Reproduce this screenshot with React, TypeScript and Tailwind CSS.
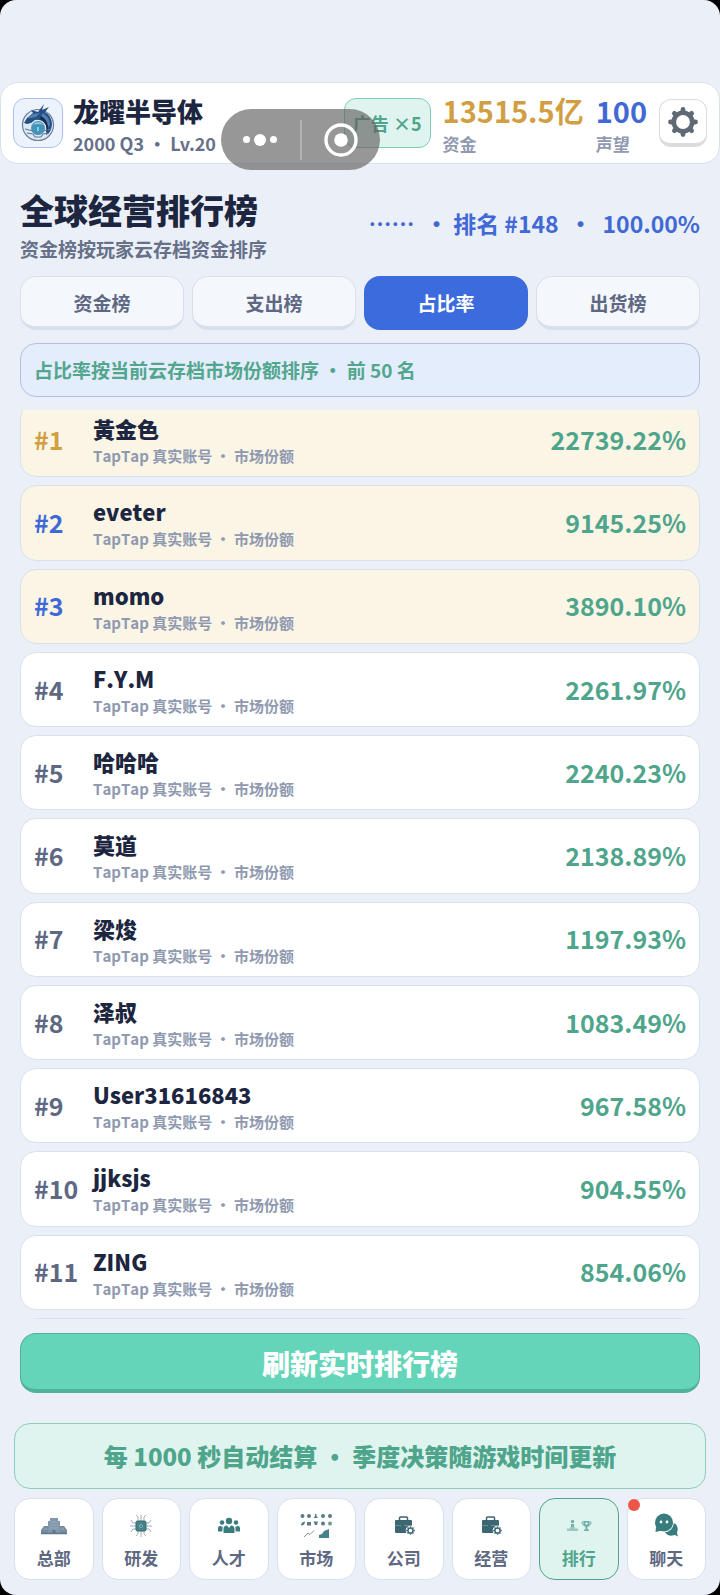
import { useLayoutEffect, useRef, useState } from "react"

const entries = [
  { name: "黃金色", share: "22739.22%" },
  { name: "eveter", share: "9145.25%" },
  { name: "momo", share: "3890.10%" },
  { name: "F.Y.M", share: "2261.97%" },
  { name: "哈哈哈", share: "2240.23%" },
  { name: "莫道", share: "2138.89%" },
  { name: "梁焌", share: "1197.93%" },
  { name: "泽叔", share: "1083.49%" },
  { name: "User31616843", share: "967.58%" },
  { name: "jjksjs", share: "904.55%" },
  { name: "ZING", share: "854.06%" },
]

const tabs = ["资金榜", "支出榜", "占比率", "出货榜"]

const navItems = [
  { label: "总部", icon: BuildingIcon },
  { label: "研发", icon: ChipIcon },
  { label: "人才", icon: PeopleIcon },
  { label: "市场", icon: MarketIcon },
  { label: "公司", icon: BriefcaseIcon },
  { label: "经营", icon: BriefcaseIcon },
  { label: "排行", icon: RankIcon },
  { label: "聊天", icon: ChatIcon, unread: true },
]

export default function App() {
  const [tab, setTab] = useState("占比率")
  const [page, setPage] = useState("排行")
  const listRef = useRef<HTMLDivElement>(null)

  useLayoutEffect(() => {
    if (listRef.current) listRef.current.scrollTop = 8
  }, [])

  return (
    <div className="bg-black">
      <div className="flex h-screen flex-col rounded-2xl bg-[#ebeff7] pt-[82px] font-['Noto_Sans_CJK_SC',sans-serif] font-black text-[#1c2640]">
        <Header />

        <main className="flex min-h-0 flex-1 flex-col px-5 pt-[25px]">
          {/* Title */}
          <div className="flex items-start justify-between">
            <div>
              <h1 className="text-[34px] leading-[42px]">全球经营排行榜</h1>
              <p className="mt-1 text-[19px] leading-7 font-bold text-[#667089]">资金榜按玩家云存档资金排序</p>
            </div>
            <p className="mt-5 text-[23px] leading-7 font-bold whitespace-pre text-[#4169d6]">……  • 排名 #148  •  100.00%</p>
          </div>

          {/* Tabs */}
          <div className="mt-[13px] grid grid-cols-4 gap-2">
            {tabs.map(t => (
              <button key={t} onClick={() => setTab(t)}
                className={`h-[54px] rounded-2xl text-[19px] font-bold ${
                  tab === t ? "bg-[#3b6bdd] text-white" : "border border-b-4 border-[#d9e0eb] bg-[#f4f7fc] pt-[3px] text-[#5e6882]"
                }`}>
                {t}
              </button>
            ))}
          </div>

          <p className="mt-[13px] rounded-2xl border border-[#b3c0e8] bg-[#e3edfc] px-[13px] py-[13px] text-[19px] leading-[26px] font-bold text-[#52a68e]">
            占比率按当前云存档市场份额排序 • 前 50 名
          </p>

          {/* Ranking list */}
          <div ref={listRef} className="mt-[13px] min-h-0 flex-1 overflow-y-auto [scrollbar-width:none]">
            <ol className="grid min-h-[991px] auto-rows-fr gap-2 [font-kerning:none]">
              {entries.map((entry, i) => (
                <li key={entry.name}
                  className={`flex items-center rounded-2xl border border-[#d8e1ee] px-[13px] font-bold ${i < 3 ? "bg-[#fbf5e6]" : "bg-white"}`}>
                  <span className={`w-[59px] text-[25px] ${i === 0 ? "text-[#d29e42]" : i < 3 ? "text-[#4169d6]" : "text-[#5e6882]"}`}>
                    #{i + 1}
                  </span>
                  <div className="flex-1 pt-px">
                    <p className="text-[22px] leading-7 font-black">{entry.name}</p>
                    <p className="mt-1 text-[15px] leading-5 text-[#8f99b0]">TapTap 真实账号 • 市场份额</p>
                  </div>
                  <span className="text-[25px] text-[#4fa58b]">{entry.share}</span>
                </li>
              ))}
              <li className="rounded-2xl border border-[#d8e1ee] bg-white" />
            </ol>
          </div>

          <button className="mt-3.5 h-[60px] rounded-2xl border border-b-4 border-[#52b199] bg-[#65d5b9] pt-0.5 text-[28px] text-white">
            刷新实时排行榜
          </button>
        </main>

        {/* Footer */}
        <footer className="mt-[30px] px-3.5 pb-[15px]">
          <p className="rounded-2xl border border-[#8bcfbb] bg-[#dff4ee] py-[15px] text-center text-2xl leading-[34px] text-[#4fa58b]">
            每 1000 秒自动结算 • 季度决策随游戏时间更新
          </p>
          <nav className="mt-[9px] grid grid-cols-8 gap-2">
            {navItems.map(({ label, icon: Icon, unread }) => (
              <button key={label} onClick={() => setPage(label)}
                className={`relative flex h-[82px] flex-col items-center rounded-2xl border pt-[9px] text-[17px] leading-7 font-bold ${
                  page === label ? "border-[#4fa58b] bg-[#dff4ee] text-[#4fa58b]" : "border-[#d8e1ee] bg-white text-[#5e6882]"
                }`}>
                <Icon />
                {label}
                {unread && <span className="absolute top-0 left-0 size-3 rounded-full bg-[#ec5648]" />}
              </button>
            ))}
          </nav>
        </footer>
      </div>
    </div>
  )
}

function Header() {
  return (
    <header className="relative flex h-[82px] items-center rounded-[18px] border border-[#d8e1ee] bg-white px-3 font-bold">
      <div className="flex size-[50px] items-center justify-center rounded-xl border border-[#a8c2ec] bg-[#edf3fd]">
        <DragonLogo />
      </div>
      <div className="ml-2.5 pt-2">
        <p className="text-[26px] leading-7 font-black">龙曜半导体</p>
        <p className="mt-1 text-lg leading-7 text-[#667089]">2000 Q3 • Lv.20</p>
      </div>
      <div className="ml-auto flex items-center">
        <button className="h-[50px] rounded-xl border border-[#7fcdb5] bg-[#dff4ee] px-2 text-lg text-[#4fa58b]">
          广告 ×5
        </button>
        <Stat label="资金" value="13515.5亿" color="text-[#d29e42]" />
        <Stat label="声望" value="100" color="text-[#4169d6]" />
        <button aria-label="设置" className="ml-3 flex h-12 w-12 items-center justify-center rounded-xl border border-b-4 border-[#dcdcdc] bg-white">
          <GearIcon />
        </button>
      </div>

      {/* Mini program capsule */}
      <div className="absolute top-[26px] left-[220px] flex h-[61px] w-[159px] items-center rounded-full bg-[#5f5f5f]/65">
        <button aria-label="更多" className="flex flex-1 items-center justify-center gap-1 text-white">
          <i className="size-[7px] rounded-full bg-white" />
          <i className="size-3 rounded-full bg-white" />
          <i className="size-[7px] rounded-full bg-white" />
        </button>
        <span className="h-10 w-0.5 bg-white/25" />
        <button aria-label="关闭" className="flex flex-1 items-center justify-center">
          <svg width="34" height="34" viewBox="0 0 34 34" fill="#fff">
            <circle cx="17" cy="17" r="15" fill="none" stroke="#fff" strokeWidth="3.4" />
            <circle cx="17" cy="17" r="6.8" />
          </svg>
        </button>
      </div>
    </header>
  )
}

function Stat({ label, value, color }: { label: string; value: string; color: string }) {
  return (
    <div className="ml-3 pt-1.5">
      <p className={`text-[29px] leading-8 ${color}`}>{value}</p>
      <p className="mt-1 text-[17px] leading-7 text-[#8f99b0]">{label}</p>
    </div>
  )
}

function DragonLogo() {
  return (
    <svg width="38" height="40" viewBox="0 0 38 40">
      <circle cx="19" cy="22" r="15.5" fill="#dfe9f5" stroke="#6d8098" strokeWidth="1.2" />
      <path d="M5 20 L8 15 L14 10 L12 7 L19 9 L25 1 L23 7 L30 4 L26 9 Q33 13 33 22 Q32 30 27 32 Q30 24 25 19 Q20 16 16 17 L12 20 L8 21Z" fill="#254f80" />
      <path d="M8 15 L14 11 L21 10 L17 14 L12 15Z M24 10 Q31 14 31 22 L28 26 Q29 18 22 13Z" fill="#4d80b0" />
      <path d="M22 13 Q30 18 29 27 L27 30 Q29 20 21 16Z" fill="#14294c" />
      <path d="M6 26 L14 28 L17 31 H21 L24 28 L32 26 M8 30 L14 31 L16 34 H22 L24 31 L30 30" fill="none" stroke="#5f7a94" strokeWidth="1.1" />
      <circle cx="19" cy="25" r="7" fill="#4593b8" />
      <path d="M13 22 Q19 16 25 22 Q19 20 13 22Z" fill="#8cc8de" />
      <path d="M19 24V28" stroke="#9fe0ee" strokeWidth="1.5" />
    </svg>
  )
}

function GearIcon() {
  return (
    <svg width="32" height="32" viewBox="0 0 32 32" stroke="#5f6a75" fill="none" strokeLinecap="round">
      <circle cx="16" cy="16" r="9.200" strokeWidth="4.600" />
      <path strokeWidth="4.800" d="M16 5V3.500M16 27V28.500M5 16H3.500M27 16H28.500M8.200 8.200L7.400 7.400M23.800 8.200L24.600 7.400M8.200 23.800L7.400 24.600M23.800 23.800L24.600 24.600" />
    </svg>
  )
}

function BuildingIcon() {
  return (
    <svg width="36" height="36" viewBox="0 0 36 36" fill="#8197aa">
      <path d="M5 26V22L8 18H12V26Z M24 26V18H28L31 22V26Z" fill="#768da2" />
      <path d="M12 26V13H14V10H22V13H24V26Z" />
      <path d="M14 14H22M14 17H22M14 20H22M8 21H11M25 21H28" stroke="#96a9b9" strokeWidth="1" />
      <path d="M5 25.500H31" stroke="#5d768c" strokeWidth="1.500" />
      <path d="M16.500 22H19.500V26H16.500Z" fill="#5d768c" />
    </svg>
  )
}

function ChipIcon() {
  return (
    <svg width="36" height="36" viewBox="0 0 36 36" fill="none">
      <path d="M15 13V9L13 7M18 13V7M21 13V9L23 7M15 23V26L13 28M18 23V29M21 23V26L23 28M13 15H10L8 12M13 18H7M13 21H10L8 24M23 15H26L28 12M23 18H29M23 21H26L28 24" stroke="#a2b0ba" strokeWidth="1" />
      <rect x="13" y="13" width="10" height="10" rx="1.500" fill="#46828a" stroke="#2f6a70" />
      <path d="M16 18L18 16L20 18L18 20Z" stroke="#7fb0b0" />
    </svg>
  )
}

function PeopleIcon() {
  return (
    <svg width="36" height="36" viewBox="0 0 36 36" fill="#397c7d">
      <circle cx="18" cy="13" r="3.200" />
      <circle cx="11" cy="14.500" r="2.300" />
      <circle cx="25" cy="14.500" r="2.300" />
      <path d="M12.500 25V21Q12.500 17.500 16 17.500L18 20L20 17.500Q23.500 17.500 23.500 21V25Z" />
      <path d="M7 23.500V20Q7 18 9.500 17.800L11 19L11.700 18.300L11.300 23.500Z M29 23.500V20Q29 18 26.500 17.800L25 19L24.300 18.300L24.700 23.500Z" />
    </svg>
  )
}

function MarketIcon() {
  return (
    <svg width="36" height="36" viewBox="0 0 36 36" fill="#587c8a">
      <circle cx="4.500" cy="8" r="2" />
      <circle cx="11" cy="8" r="2" />
      <path d="M15.500 10L17 8V6H18.500V8L20 10Z M3 17.500Q3 14 7 13.500Q7 17.500 3 17.500Z M9 14H13V17.500H9Z M15.500 13.500H20L19 17H17Z" />
      <circle cx="25" cy="8" r="2" />
      <circle cx="32" cy="8" r="2" />
      <circle cx="25" cy="15.500" r="2" />
      <circle cx="32" cy="15.500" r="2" fill="#6f9a90" />
      <path d="M6 29L10 25L12 26.500L16 22.500" fill="none" stroke="#8495a2" />
      <path d="M21 30V27L24 26L26 23L31 21V30Z" fill="#46828a" />
    </svg>
  )
}

function BriefcaseIcon() {
  return (
    <svg width="36" height="36" viewBox="0 0 36 36" fill="#3c6672">
      <path d="M13.500 12V10Q13.500 9 14.500 9H20.500Q21.500 9 21.500 10V12" fill="none" stroke="#3c6672" strokeWidth="1.500" />
      <rect x="9" y="12" width="17" height="13" rx="1" />
      <path d="M9 17.500H15M18 17.500H26" stroke="#7c9ba3" strokeWidth=".7" />
      <circle cx="24.500" cy="22.500" r="4.800" fill="#fff" />
      <circle cx="24.500" cy="22.500" r="2.600" fill="#fff" stroke="#3c6672" strokeWidth="1.500" />
      <path d="M24.500 19.500V18.200M24.500 25.500V26.800M21.500 22.500H20.200M27.500 22.500H28.800M22.400 20.400L21.500 19.500M26.600 20.400L27.500 19.500M22.400 24.600L21.500 25.500M26.600 24.600L27.500 25.500" stroke="#3c6672" strokeWidth="1.300" />
    </svg>
  )
}

function RankIcon() {
  return (
    <svg width="36" height="36" viewBox="0 0 36 36" fill="#6fb0a8">
      <circle cx="11.500" cy="13.500" r="1.700" />
      <path d="M10 16H13V21H10Z" />
      <path d="M6 23V20.500H9V19H14V20.500H17V23Z" fill="#9acbc3" />
      <path d="M22.500 13H28.500V16Q28.500 19 25.500 19Q22.500 19 22.500 16Z M24.500 19H26.500V21.500H24.500Z M23 21.500H28V23H23Z" />
      <path d="M22.500 14H21Q21 17 23 17.500M28.500 14H30Q30 17 28 17.500" fill="none" stroke="#6fb0a8" />
      <circle cx="25.500" cy="15.500" r="1.200" fill="#dff4ee" />
    </svg>
  )
}

function ChatIcon() {
  return (
    <svg width="36" height="36" viewBox="0 0 36 36" fill="#397c7d">
      <circle cx="23" cy="21" r="6.800" />
      <path d="M25 26L30 28.500L28.500 23Z" />
      <circle cx="16" cy="14.500" r="9.800" fill="#fff" />
      <circle cx="16" cy="14.500" r="9" />
      <path d="M8 19L7.500 24L14 22.500Z" />
      <circle cx="13" cy="14" r="1.400" fill="#fff" />
      <circle cx="19" cy="14" r="1.400" fill="#fff" />
    </svg>
  )
}
